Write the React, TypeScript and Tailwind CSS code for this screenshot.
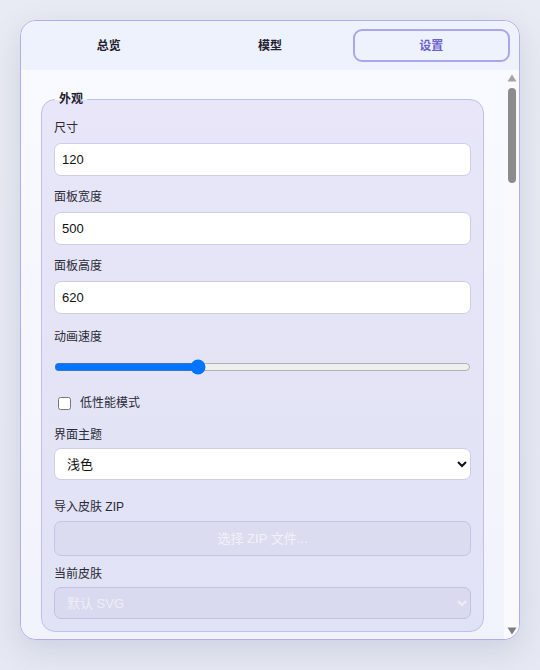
import { useState } from 'react';

const tabs = [
  { id: 'overview', label: '总览' },
  { id: 'model', label: '模型' },
  { id: 'settings', label: '设置' },
];

const fontStack = { fontFamily: '"Liberation Sans", "Noto Sans CJK SC", sans-serif' };

function Field({
  label,
  gap = 'mb-[7px]',
  children,
}: {
  label: string;
  gap?: string;
  children: React.ReactNode;
}) {
  return (
    <div className="flex flex-col">
      <label className={`${gap} text-[12px] leading-[15px] text-[#2a2a36]`}>{label}</label>
      {children}
    </div>
  );
}

function TextInput({ value }: { value: string }) {
  const [v, setV] = useState(value);
  return (
    <input
      value={v}
      onChange={(e) => setV(e.target.value)}
      className="h-[33px] w-full rounded-[7px] border border-[#cfcde6] bg-white px-[7px] text-[13px] text-[#111] outline-none"
      style={fontStack}
    />
  );
}

// drawn scrollbar: the page is photographed with native scrollbars hidden
function ScrollTrack() {
  return (
    <div className="flex w-[15px] shrink-0 flex-col items-center bg-[#fafafd] pt-[4px] pb-[4px]">
      <svg width="10" height="8" viewBox="0 0 10 8" className="shrink-0">
        <path d="M5 0.5 L9.5 7.5 L0.5 7.5 Z" fill="#a3a3a3" />
      </svg>
      <div className="mt-[6px] h-[95px] w-[8px] shrink-0 rounded-full bg-[#8c8c8c]" />
      <div className="flex-1" />
      <svg width="10" height="8" viewBox="0 0 10 8" className="shrink-0">
        <path d="M0.5 0.5 L9.5 0.5 L5 7.5 Z" fill="#7d7d7d" />
      </svg>
    </div>
  );
}

export default function App() {
  const [tab, setTab] = useState('settings');
  const [speed, setSpeed] = useState(1);
  const [lowPerf, setLowPerf] = useState(false);

  return (
    <div
      className="min-h-[670px] w-[540px] bg-gradient-to-b from-[#e8ebf3] to-[#e6e9f3] pt-5 pl-5"
      style={fontStack}
    >
      <div className="flex h-[620px] w-[500px] flex-col overflow-hidden rounded-[16px] border border-[#b3acef] bg-[#f3f5fd] shadow-[0_10px_30px_rgba(90,100,140,0.18)]">
        <div className="grid shrink-0 grid-cols-3 gap-[4px] bg-[#eef2fc] px-[9px] pt-[8px] pb-[8px]">
          {tabs.map((t) => {
            const active = tab === t.id;
            return (
              <button
                key={t.id}
                type="button"
                onClick={() => setTab(t.id)}
                className={`h-[33px] rounded-[9px] border-2 text-[12px] font-bold ${
                  active ? 'border-[#aca5ee] text-[#6b60d2]' : 'border-transparent text-[#1f2230]'
                }`}
              >
                {t.label}
              </button>
            );
          })}
        </div>

        <div className="flex min-h-0 flex-1">
          <div className="min-w-0 flex-1 overflow-hidden bg-gradient-to-b from-[#f9faff] to-[#f1f3fc] px-5 pt-[20px] pb-[7px]">
            <fieldset className="rounded-[14px] border border-[#c3bfe6] bg-gradient-to-b from-[#e8e6f8] to-[#e0e2f5] px-[12px] pt-[13px] pb-[12px]">
              <legend className="ml-[1px] px-[4px] text-[12px] font-bold text-[#1f2230]">外观</legend>
              <div className="flex flex-col gap-[14px]">
                <Field label="尺寸">
                  <TextInput value="120" />
                </Field>
                <Field label="面板宽度">
                  <TextInput value="500" />
                </Field>
                <Field label="面板高度">
                  <TextInput value="620" />
                </Field>
                <div className="mt-[2px]">
                  <Field label="动画速度">
                    <input
                      type="range"
                      min={0.1}
                      max={2.75}
                      step={0.05}
                      value={speed}
                      onChange={(e) => setSpeed(Number(e.target.value))}
                      className="mt-[7px] mb-[5px] w-full"
                    />
                  </Field>
                </div>
                <label className="flex items-center gap-[9px] pl-[4px] text-[12px] text-[#2a2a36]">
                  <input
                    type="checkbox"
                    checked={lowPerf}
                    onChange={(e) => setLowPerf(e.target.checked)}
                    className="h-[13px] w-[13px]"
                  />
                  低性能模式
                </label>
                <div className="mt-[2px]">
                  <Field label="界面主题" gap="mb-[5px]">
                    <select
                      defaultValue="light"
                      className="h-[32px] w-full rounded-[7px] border border-[#cfcde6] bg-white px-[8px] text-[13px] text-[#111] outline-none"
                      style={fontStack}
                    >
                      <option value="light">浅色</option>
                      <option value="dark">深色</option>
                      <option value="auto">跟随系统</option>
                    </select>
                  </Field>
                </div>
                <div className="mt-[6px]">
                  <Field label="导入皮肤 ZIP" gap="mb-[6px]">
                    <button
                      type="button"
                      disabled
                      className="h-[35px] w-full rounded-[7px] border border-[#c6c4e2] bg-[#dcdcf0] text-[13px] text-[#f1f1fb]"
                    >
                      选择 ZIP 文件...
                    </button>
                  </Field>
                </div>
                <div className="-mt-[3px]">
                  <Field label="当前皮肤" gap="mb-[5px]">
                    <select
                      disabled
                      defaultValue="svg"
                      className="h-[32px] w-full rounded-[7px] border border-[#c3c1e0] bg-[#d9daef] px-[8px] text-[13px] text-[#eeeef9] opacity-100"
                      style={fontStack}
                    >
                      <option value="svg">默认 SVG</option>
                    </select>
                  </Field>
                </div>
              </div>
            </fieldset>
          </div>
          <ScrollTrack />
        </div>
      </div>
    </div>
  );
}
